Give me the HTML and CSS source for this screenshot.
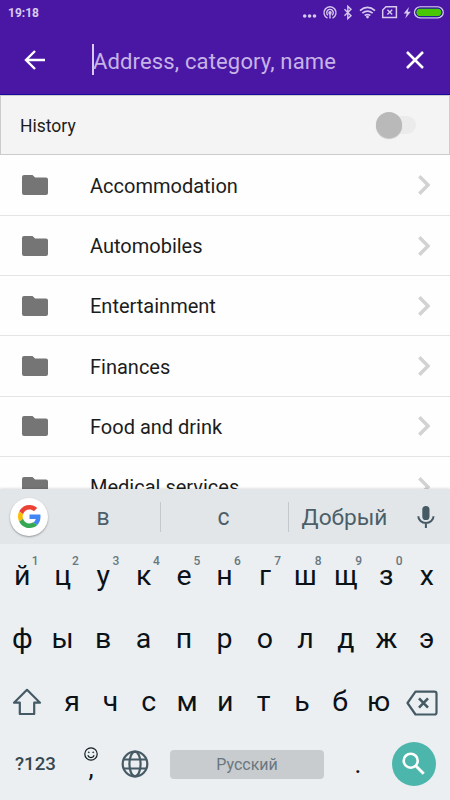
FILE: index.html
```html
<!DOCTYPE html>
<html lang="en">
<head>
  <meta charset="UTF-8" />
  <meta name="viewport" content="width=device-width, initial-scale=1.0"/>
  <title>Search</title>
  <link rel="stylesheet" href="styles.css">
</head>
<body>
  <svg class="defs" width="0" height="0">
    <symbol id="folder" viewBox="0 0 26 20">
      <path d="M2 0h8.5l2.6 2.5H24a2 2 0 0 1 2 2V18a2 2 0 0 1-2 2H2a2 2 0 0 1-2-2V2a2 2 0 0 1 2-2z" fill="#757575"/>
    </symbol>
    <symbol id="chevron" viewBox="0 0 12 20">
      <path d="M1.3 1.3L10 10l-8.7 8.7" fill="none" stroke="#d2d2d2" stroke-width="3.4"/>
    </symbol>
  </svg>

  <div class="status-bar">
    <span class="time">19:18</span>
    <svg class="status-icons" width="142" height="16" viewBox="302 5 142 16" fill="none" stroke="#d6c8ee" stroke-width="1.4">
      <g fill="#d6c8ee" stroke="none">
        <circle cx="304.7" cy="16" r="1.8"/><circle cx="309.6" cy="16" r="1.8"/><circle cx="314.5" cy="16" r="1.8"/>
      </g>
      <path d="M327.5 18.2a6 6 0 1 1 5 0"/>
      <path d="M328 15.3a3.3 3.3 0 1 1 4 0M330 13v5.5"/>
      <circle cx="330" cy="12.7" r="1" fill="#d6c8ee"/>
      <path d="M344.5 9.3l6.5 6.4-3.2 3V6.3l3.2 3-6.5 6.4"/>
      <path d="M360 10.6q7.5-6.4 15 0M362.3 13.2q5.2-4.2 10.4 0M364.7 15.5q2.8-2 5.6 0" stroke-width="1.7"/>
      <circle cx="367.5" cy="17" r="1.4" fill="#d6c8ee" stroke="none"/>
      <path d="M386 6.8h10.4v10.8h-13.7v-7.6z" stroke-width="1.5"/>
      <path d="M387.4 9.8l4.8 4.8m0-4.8l-4.8 4.8"/>
      <path d="M409 7l-5.3 6.4h3l-1.4 5 5.5-6.7h-3z" fill="#d6c8ee" stroke="none"/>
      <rect x="414.6" y="6.9" width="28.6" height="11" rx="5.5"/>
      <rect x="415.9" y="8.2" width="26" height="8.4" rx="4.2" fill="#49c800" stroke="#1d1c92" stroke-width="1"/>
    </svg>
  </div>

  <div class="search-bar">
    <svg class="back" width="22" height="20" viewBox="0 0 22 20" fill="none" stroke="#fff" stroke-width="2.4">
      <path d="M21 10H2.5M11 1L2 10l9 9"/>
    </svg>
    <div class="query"><span>Address, category, name</span></div>
    <svg class="clear" width="18" height="18" viewBox="0 0 18 18" fill="none" stroke="#fff" stroke-width="2.5">
      <path d="M1 1l16 16M17 1L1 17"/>
    </svg>
  </div>

  <div class="history">
    <span>History</span>
    <div class="switch"><div class="thumb"></div></div>
  </div>

  <div class="list">
    <div class="row"><svg class="folder"><use href="#folder"/></svg><span>Accommodation</span><svg class="chevron"><use href="#chevron"/></svg></div>
    <div class="row"><svg class="folder"><use href="#folder"/></svg><span>Automobiles</span><svg class="chevron"><use href="#chevron"/></svg></div>
    <div class="row"><svg class="folder"><use href="#folder"/></svg><span>Entertainment</span><svg class="chevron"><use href="#chevron"/></svg></div>
    <div class="row"><svg class="folder"><use href="#folder"/></svg><span>Finances</span><svg class="chevron"><use href="#chevron"/></svg></div>
    <div class="row"><svg class="folder"><use href="#folder"/></svg><span>Food and drink</span><svg class="chevron"><use href="#chevron"/></svg></div>
    <div class="row"><svg class="folder"><use href="#folder"/></svg><span>Medical services</span><svg class="chevron"><use href="#chevron"/></svg></div>
  </div>

  <div class="keyboard">
    <div class="suggestions">
      <div class="google">
        <svg width="23" height="23" viewBox="0 0 48 48">
          <path fill="#EA4335" d="M24 9.5c3.54 0 6.71 1.22 9.21 3.6l6.85-6.85C35.9 2.38 30.47 0 24 0 14.62 0 6.51 5.38 2.56 13.22l7.98 6.19C12.43 13.72 17.74 9.5 24 9.5z"/>
          <path fill="#4285F4" d="M46.98 24.55c0-1.57-.15-3.09-.38-4.55H24v9.02h12.94c-.58 2.96-2.26 5.48-4.78 7.18l7.73 6c4.51-4.18 7.09-10.36 7.09-17.65z"/>
          <path fill="#FBBC05" d="M10.53 28.59c-.48-1.45-.76-2.99-.76-4.59s.27-3.14.76-4.59l-7.98-6.19C.92 16.46 0 20.12 0 24c0 3.88.92 7.54 2.56 10.78l7.97-6.19z"/>
          <path fill="#34A853" d="M24 48c6.48 0 11.93-2.13 15.89-5.81l-7.73-6c-2.15 1.45-4.92 2.3-8.16 2.3-6.26 0-11.57-4.22-13.47-9.91l-7.98 6.19C6.51 42.62 14.62 48 24 48z"/>
        </svg>
      </div>
      <span class="word first">в</span>
      <span class="word">с</span>
      <span class="word last">Добрый</span>
      <svg class="mic" width="18" height="24" viewBox="0 0 18 24">
        <rect x="5.3" y="1" width="7.2" height="14" rx="3.6" fill="#455a64"/>
        <path d="M1.3 11.2a7.6 6.8 0 0 0 15.2 0M8.9 18v5" fill="none" stroke="#455a64" stroke-width="2"/>
      </svg>
    </div>

    <div class="keys top">
      <span>й<sup>1</sup></span><span>ц<sup>2</sup></span><span>у<sup>3</sup></span><span>к<sup>4</sup></span><span>е<sup>5</sup></span><span>н<sup>6</sup></span><span>г<sup>7</sup></span><span>ш<sup>8</sup></span><span>щ<sup>9</sup></span><span>з<sup>0</sup></span><span>х</span>
    </div>
    <div class="keys">
      <span>ф</span><span>ы</span><span>в</span><span>а</span><span>п</span><span>р</span><span>о</span><span>л</span><span>д</span><span>ж</span><span>э</span>
    </div>
    <div class="keys third">
      <svg class="shift" width="30" height="28" viewBox="0 0 30 28" fill="none" stroke="#455a64" stroke-width="2.2" stroke-linejoin="round">
        <path d="M15 1.8L28 14.7h-5.8v11.3H7.8V14.7H2z"/>
      </svg>
      <span>я</span><span>ч</span><span>с</span><span>м</span><span>и</span><span>т</span><span>ь</span><span>б</span><span>ю</span>
      <svg class="backspace" width="32" height="26" viewBox="0 0 32 26" fill="none" stroke="#455a64" stroke-width="2.2" stroke-linejoin="round">
        <path d="M9.5 1.7H28.5a2 2 0 0 1 2 2V22.5a2 2 0 0 1-2 2H9.5L1.5 13z"/>
        <path d="M13 8.3l9 9.4m0-9.4l-9 9.4" stroke-width="2.6"/>
      </svg>
    </div>
    <div class="bottom">
      <span class="symbols">?123</span>
      <div class="comma">
        <svg width="14" height="14" viewBox="0 0 14 14" fill="none" stroke="#111b20" stroke-width="1.2">
          <circle cx="7" cy="7" r="6.2"/>
          <path d="M3.8 8.3a3.4 3.4 0 0 0 6.4 0"/>
          <circle cx="4.8" cy="5.3" r=".5" fill="#111b20" stroke-width=".6"/>
          <circle cx="9.2" cy="5.3" r=".5" fill="#111b20" stroke-width=".6"/>
        </svg>
        <span>,</span>
      </div>
      <svg class="globe" width="28" height="28" viewBox="0 0 28 28" fill="none" stroke="#455a64" stroke-width="2.2">
        <circle cx="14" cy="14" r="12.3"/>
        <ellipse cx="14" cy="14" rx="5.6" ry="12.3"/>
        <path d="M3 9.5h22M3 18.5h22"/>
      </svg>
      <div class="space">Русский</div>
      <span class="period">.</span>
      <div class="go">
        <svg width="24" height="24" viewBox="0 0 24 24" fill="none" stroke="#fff" stroke-width="2.6">
          <circle cx="8.7" cy="8.7" r="7"/>
          <path d="M13.7 13.7l8 8" stroke-width="3"/>
        </svg>
      </div>
    </div>
  </div>
</body>
</html>
```

FILE: styles.css
```css
* {
  box-sizing: border-box;
}
body {
  margin: 0;
  width: 450px;
  height: 800px;
  overflow: hidden;
  display: flex;
  flex-direction: column;
  font-family: Roboto, sans-serif;
  background: #fefefe;
  color: #1c1c1c;
}
svg {
  display: block;
  flex: none;
}
.defs {
  position: absolute;
}
.status-bar {
  height: 25px;
  flex: none;
  padding: 0 6px 0 8px;
  display: flex;
  align-items: center;
  justify-content: space-between;
  background: #4a17a5;
}
.time {
  color: #d9ccf0;
  font-size: 12px;
  font-weight: bold;
}
.search-bar {
  height: 70px;
  flex: none;
  display: flex;
  align-items: center;
  padding: 0 26px 0 24px;
  background: #4a17a5;
  border-bottom: 1px solid #1a0a9c;
}
.query {
  flex: 1;
  height: 31px;
  margin-left: 46px;
  border-left: 2px solid #d8caf0;
  line-height: 35px;
  font-size: 22px;
  letter-spacing: 0.15px;
  color: #c7b3e6;
}
.query span {
  margin-left: -1px;
}
.history {
  height: 60px;
  flex: none;
  display: flex;
  align-items: center;
  justify-content: space-between;
  padding: 0 33px 0 19px;
  background: #f4f4f4;
  border: 1px solid #ccc;
  font-size: 17.5px;
}
.history span {
  padding-top: 2px;
}
.switch {
  width: 40px;
  height: 18px;
  border-radius: 9px;
  background: #ebebeb;
  display: flex;
  align-items: center;
}
.thumb {
  width: 26px;
  height: 26px;
  flex: none;
  border-radius: 50%;
  background: #b9b9b9;
  box-shadow: 0 1px 1px rgba(0,0,0,0.2);
}
.list {
  flex: 1;
  min-height: 0;
  padding-top: 0.6px;
  overflow: hidden;
}
.row {
  height: 60.3px;
  display: flex;
  align-items: center;
  padding: 0 20px 0 22px;
  border-bottom: 1px solid #e4e4e4;
  font-size: 20px;
}
.row span {
  flex: 1;
  margin-left: 42px;
  padding-top: 1px;
}
.folder {
  width: 26px;
  height: 20px;
}
.chevron {
  width: 12px;
  height: 20px;
}
.keyboard {
  height: 311px;
  flex: none;
  position: relative;
  background: #ebeff2;
  box-shadow: 0 0 3px rgba(0,0,0,0.2);
}
.suggestions {
  height: 55px;
  display: flex;
  align-items: center;
  padding: 0 15px 0 10px;
  background: #e2e6e9;
  color: #4c5f68;
}
.google {
  width: 38px;
  height: 38px;
  border-radius: 50%;
  background: #fff;
  box-shadow: 0 1px 2px rgba(0,0,0,0.35);
  display: flex;
  align-items: center;
  justify-content: center;
}
.word {
  width: 128px;
  height: 30px;
  padding-right: 2px;
  line-height: 31px;
  text-align: center;
  font-size: 23px;
  border-right: 1px solid #c3c9cc;
}
.word.first {
  width: 113px;
}
.word.last {
  width: 112px;
  padding-right: 1px;
  border-right: 0;
  font-size: 22.7px;
}
.mic {
  margin-left: auto;
}
.keys {
  height: 63px;
  padding: 0 3px 0 2px;
  display: grid;
  grid-template-columns: repeat(11, 1fr);
  align-items: center;
  text-align: center;
  font-size: 28.5px;
  color: #0a1218;
}
.keys span {
  position: relative;
}
.keys sup {
  position: absolute;
  right: 4px;
  top: -5px;
  line-height: 14px;
  font-size: 12px;
  font-weight: 500;
  color: #68777f;
}
.keys.third {
  padding: 0 12px;
  grid-template-columns: 41px repeat(9, 38.3px) 1fr;
}
.shift {
  margin-top: 1px;
}
.backspace {
  justify-self: end;
  margin-top: 2px;
}
.bottom {
  height: 62px;
  display: flex;
  align-items: center;
  padding: 0 14px 0 15px;
  color: #37474f;
}
.symbols {
  width: 69px;
  font-size: 18.7px;
  font-weight: 500;
}
.comma {
  width: 14px;
  padding-bottom: 6px;
  display: flex;
  flex-direction: column;
  align-items: center;
  color: #0a1218;
}
.comma span {
  line-height: 14px;
  font-size: 26px;
}
.globe {
  margin-left: 23px;
}
.space {
  width: 154px;
  height: 29px;
  margin-left: 21px;
  border-radius: 4px;
  background: #c8cccf;
  color: #6a777e;
  line-height: 30px;
  text-align: center;
  font-size: 16px;
}
.period {
  width: 68px;
  text-align: center;
  font-size: 26px;
  color: #0a1218;
}
.go {
  width: 44px;
  height: 44px;
  border-radius: 50%;
  background: #4db6ac;
  display: flex;
  align-items: center;
  justify-content: center;
}
```
